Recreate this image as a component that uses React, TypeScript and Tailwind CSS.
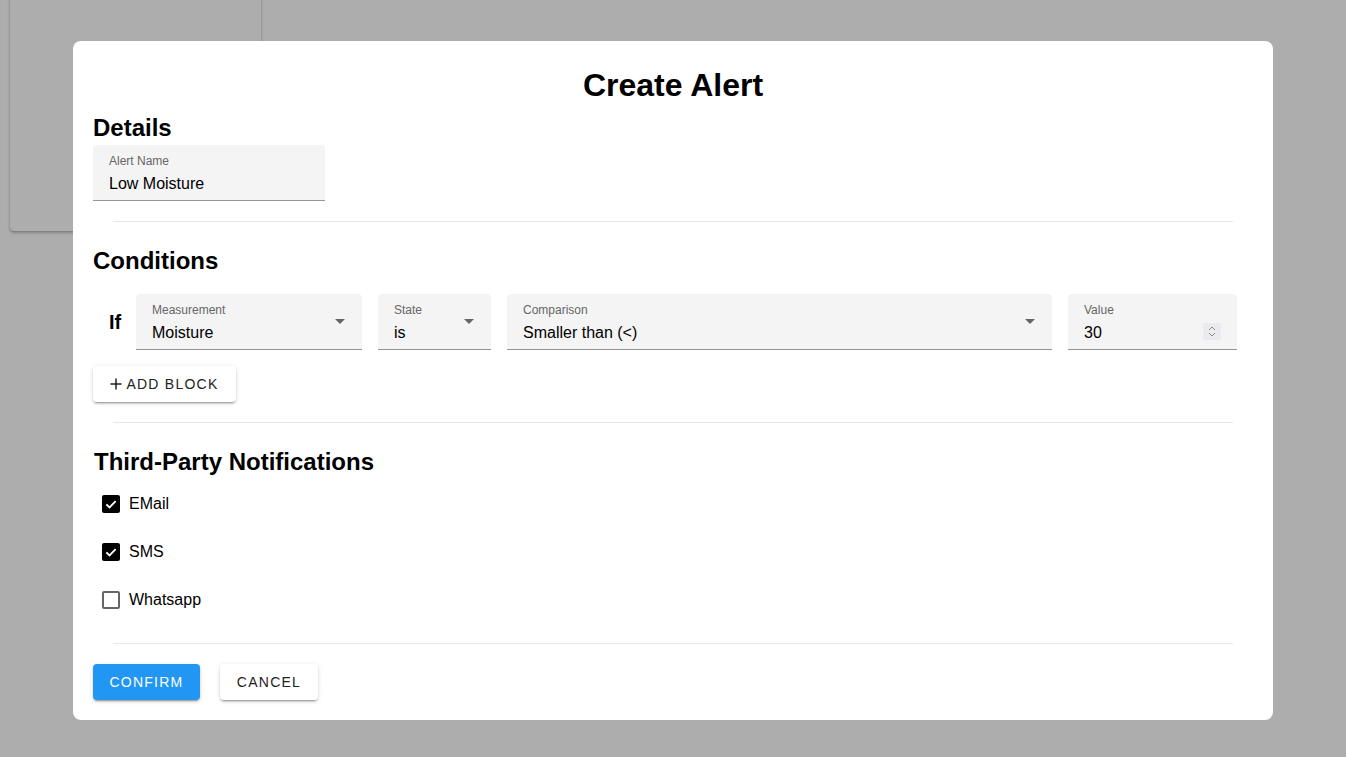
import React from "react";

const font = { fontFamily: '"Liberation Sans", Arial, sans-serif' };

function FilledField({ label, value, className = "", select = false, number = false }: {
  label: string; value: string; className?: string; select?: boolean; number?: boolean;
}) {
  return (
    <div className={`relative h-[56px] rounded-t-[4px] bg-[#f4f4f4] border-b border-[#949494] ${className}`}>
      <div className="absolute left-[16px] top-[9px] text-[12px] leading-[14px] text-[#666666]">{label}</div>
      <div className="absolute left-[16px] top-[29px] text-[16px] leading-[20px] text-black">{value}</div>
      {select && (
        <svg className="absolute right-[17px] top-[25px]" width="10" height="5" viewBox="0 0 10 5">
          <path d="M0 0 L10 0 L5 5 Z" fill="#666666" />
        </svg>
      )}
      {number && (
        <div className="absolute right-[16px] top-[29px] w-[18px] h-[17px] bg-[#ebebef] flex flex-col items-center justify-center gap-[1px]">
          <svg width="8" height="5" viewBox="0 0 8 5"><path d="M1 4 L4 1 L7 4" stroke="#8a8a8a" strokeWidth="1" fill="none" /></svg>
          <svg width="8" height="5" viewBox="0 0 8 5"><path d="M1 1 L4 4 L7 1" stroke="#8a8a8a" strokeWidth="1" fill="none" /></svg>
        </div>
      )}
    </div>
  );
}

function Check({ label, checked }: { label: string; checked: boolean }) {
  return (
    <div className="h-[48px] flex items-center">
      <div className="ml-[9px] w-[18px] h-[18px] flex items-center justify-center">
        {checked ? (
          <div className="w-[18px] h-[18px] rounded-[2px] bg-black flex items-center justify-center">
            <svg width="14" height="14" viewBox="0 0 24 24">
              <path d="M4 12.5 L9.5 18 L20 7" stroke="white" strokeWidth="3.2" fill="none" />
            </svg>
          </div>
        ) : (
          <div className="w-[18px] h-[18px] rounded-[2px] border-2 border-[#666666]" />
        )}
      </div>
      <span className="ml-[9px] text-[16px] text-black">{label}</span>
    </div>
  );
}

const Divider = () => <div className="mx-[20px] h-px bg-[#e8e8e8]" />;

const raised = "shadow-[0_3px_1px_-2px_rgba(0,0,0,0.2),0_2px_2px_0_rgba(0,0,0,0.14),0_1px_5px_0_rgba(0,0,0,0.12)]";

export default function App() {
  return (
    <div className="relative w-full h-[757px] bg-[#adadad] overflow-hidden" style={font}>
      {/* card behind the backdrop */}
      <div className="absolute left-[10px] top-[-20px] w-[251px] h-[251px] rounded-[4px] bg-[#adadad] shadow-[0_2px_3px_rgba(0,0,0,0.25),0_0_1px_rgba(0,0,0,0.3)]" />

      {/* dialog */}
      <div className="absolute left-[73px] top-[41px] w-[1200px] h-[679px] bg-white rounded-[8px] px-[20px] pt-[24px]">
        <h1 className="text-center text-[32px] leading-[40px] font-bold text-black">Create Alert</h1>

        <h2 className="mt-[9px] text-[24px] leading-[28px] font-bold text-black">Details</h2>
        <FilledField label="Alert Name" value="Low Moisture" className="mt-[3px] w-[232px]" />
        <div className="mt-[20px]"><Divider /></div>

        <h2 className="mt-[25px] text-[24px] leading-[28px] font-bold text-black">Conditions</h2>
        <div className="mt-[19px] flex items-center gap-[16px] pl-[16px] pr-[16px]">
          <span className="text-[20px] font-bold text-black w-[11px]">If</span>
          <FilledField label="Measurement" value="Moisture" select className="w-[226px]" />
          <FilledField label="State" value="is" select className="w-[113px]" />
          <FilledField label="Comparison" value="Smaller than (<)" select className="flex-1" />
          <FilledField label="Value" value="30" number className="w-[169px]" />
        </div>
        <button className={`mt-[16px] h-[36px] w-[143px] flex items-center justify-center gap-[4px] bg-white rounded-[4px] text-[14px] tracking-[1.25px] text-[#222222] ${raised}`}>
          <svg width="12" height="12" viewBox="0 0 12 12"><path d="M6 0.5 V11.5 M0.5 6 H11.5" stroke="#222222" strokeWidth="1.5" /></svg>
          ADD BLOCK
        </button>
        <div className="mt-[20px]"><Divider /></div>

        <h2 className="mt-[25px] ml-[1px] text-[24px] leading-[28px] font-bold text-black">Third-Party Notifications</h2>
        <div className="mt-[4px]">
          <Check label="EMail" checked />
          <Check label="SMS" checked />
          <Check label="Whatsapp" checked={false} />
        </div>
        <div className="mt-[19px]"><Divider /></div>

        <div className="mt-[20px] flex gap-[20px]">
          <button className={`h-[36px] w-[107px] rounded-[4px] bg-[#2196f3] text-white text-[14px] tracking-[1.25px] ${raised}`}>
            CONFIRM
          </button>
          <button className={`h-[36px] w-[98px] rounded-[4px] bg-white text-[#222222] text-[14px] tracking-[1.25px] ${raised}`}>
            CANCEL
          </button>
        </div>
      </div>
    </div>
  );
}
